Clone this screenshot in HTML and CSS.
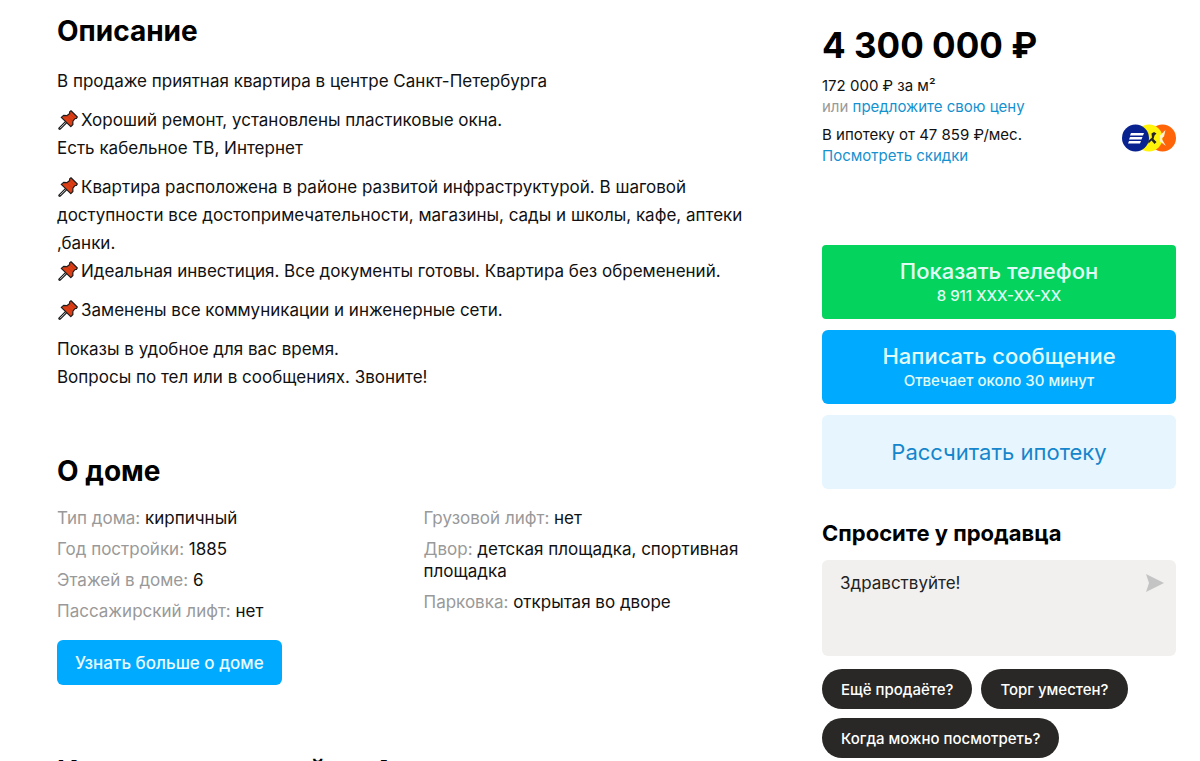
FILE: index.html
```html
<!DOCTYPE html>
<html lang="ru">
<head>
<meta charset="utf-8">
<title>Квартира в центре Санкт-Петербурга</title>
<link rel="stylesheet" href="styles.css">
</head>
<body>
<svg class="sprite" aria-hidden="true">
  <symbol id="pin" viewBox="0 0 20 20">
    <path d="M8 12.200 1.700 18.500" stroke="#1c1c1c" stroke-width="2.800" stroke-linecap="round"/>
    <path d="M8 12.200 2 18.200" stroke="#c9ced2" stroke-width="1"/>
    <path d="M13 .8 19.300 7 18.400 8.500 16.800 8.600 14.800 11.300 14.900 14.500 12.800 16.600 3.300 7.400 5.600 5.400 8.800 5.700 11.700 3.500 11.600 1.900Z" fill="#dc3f16" stroke="#1c1c1c" stroke-width="1.200" stroke-linejoin="round"/>
    <path d="M11.700 3.500 16.800 8.600M8.800 5.700 14.800 11.300" stroke="#b8300f" stroke-width=".6"/>
  </symbol>
</svg>
<main class="page">
  <div class="content">
    <section class="description">
      <h2 class="title">Описание</h2>
      <p>В продаже приятная квартира в центре Санкт-Петербурга</p>
      <p><svg class="pin"><use href="#pin"/></svg>Хороший ремонт, установлены пластиковые окна.<br>Есть кабельное ТВ, Интернет</p>
      <p><svg class="pin"><use href="#pin"/></svg>Квартира расположена в районе развитой инфраструктурой. В шаговой<br>доступности все достопримечательности, магазины, сады и школы, кафе, аптеки<br>,банки.<br><svg class="pin"><use href="#pin"/></svg>Идеальная инвестиция. Все документы готовы. Квартира без обременений.</p>
      <p><svg class="pin"><use href="#pin"/></svg>Заменены все коммуникации и инженерные сети.</p>
      <p>Показы в удобное для вас время.<br>Вопросы по тел или в сообщениях. Звоните!</p>
    </section>
    <section class="house">
      <h2 class="title">О доме</h2>
      <div class="params">
        <ul class="param-list">
          <li><span class="label">Тип дома:</span> кирпичный</li>
          <li><span class="label">Год постройки:</span> 1885</li>
          <li><span class="label">Этажей в доме:</span> 6</li>
          <li><span class="label">Пассажирский лифт:</span> нет</li>
        </ul>
        <ul class="param-list">
          <li><span class="label">Грузовой лифт:</span> нет</li>
          <li><span class="label">Двор:</span> детская площадка, спортивная площадка</li>
          <li><span class="label">Парковка:</span> открытая во дворе</li>
        </ul>
      </div>
      <button class="more" type="button">Узнать больше о доме</button>
    </section>
    <h2 class="title next-title">Ипотека с выгодой на Авито</h2>
  </div>
  <aside class="sidebar">
    <h1 class="price">4 300 000 ₽</h1>
    <div class="price-info">
      <div>172 000 ₽ за м²</div>
      <div><span class="label">или</span> <a href="#">предложите свою цену</a></div>
    </div>
    <div class="mortgage">
      <div>
        <div>В ипотеку от 47 859 ₽/мес.</div>
        <a href="#">Посмотреть скидки</a>
      </div>
      <svg class="banks" viewBox="0 0 54 28" aria-label="Банки">
        <circle cx="40.500" cy="14" r="13.500" fill="#ff6508"/>
        <circle cx="27" cy="14" r="13.500" fill="#fff40a"/>
        <path d="M38 11.500 43.500 6 42 12.500 39.500 14.500 44 22 38 17.500Z" fill="#fff3cf"/>
        <path d="M26 17 30 13.500 29.500 9.500 32 8 34.500 9.500 32.500 11.500 31.500 15 34.500 18 32.500 20 29.500 16.500 26.500 19.500Z" fill="#252525"/>
        <circle cx="13.500" cy="14" r="13.500" fill="#08228f"/>
        <path d="M9 9h13l-1 2.500H8ZM8 13h12.500l-1 2.500H7ZM7 17h12l-1 2.500H6Z" fill="#fff"/>
      </svg>
    </div>
    <div class="actions">
      <button class="action phone" type="button"><span>Показать телефон</span><small>8 911 XXX-XX-XX</small></button>
      <button class="action message" type="button"><span>Написать сообщение</span><small>Отвечает около 30 минут</small></button>
      <button class="action calc" type="button">Рассчитать ипотеку</button>
    </div>
    <form class="ask">
      <label class="ask-title" for="question">Спросите у продавца</label>
      <div class="ask-box">
        <textarea id="question">Здравствуйте!</textarea>
        <button class="send" type="button" aria-label="Отправить">
          <svg viewBox="0 0 18 18"><path d="M0 0 18 9 0 18 3 9Z" fill="#c4c4c4"/></svg>
        </button>
      </div>
      <div class="chips">
        <button class="chip" type="button">Ещё продаёте?</button>
        <button class="chip" type="button">Торг уместен?</button>
        <button class="chip" type="button">Когда можно посмотреть?</button>
      </div>
    </form>
  </aside>
</main>
</body>
</html>
```
FILE: styles.css
```css
* { box-sizing: border-box; }
body { margin: 0; background: #fff; color: #111; font-family: Inter, "Liberation Sans", sans-serif; font-size: 17px; }
h1, h2, p, ul { margin: 0; padding: 0; }
button, textarea { border: 0; font: inherit; }
button { cursor: pointer; }
a { color: #1591cf; text-decoration: none; }
.sprite { position: absolute; width: 0; height: 0; }
.page { display: grid; grid-template-columns: minmax(0, 1fr) 354px; gap: 56px; padding: 14px 24px 0 57px; }
.title { color: #000; font-size: 28px; line-height: 34px; font-weight: 700; }
.label { color: #999; }

.description { display: flex; flex-direction: column; gap: 11px; line-height: 28px; }
.description .title { margin-bottom: 8px; }
.pin { width: 20px; height: 20px; margin: 0 3px 0 1px; vertical-align: -4px; }

.house { margin-top: 63px; }
.params { display: grid; grid-template-columns: 1fr 1fr; gap: 24px; margin-top: 19px; }
.param-list { display: flex; flex-direction: column; gap: 9px; list-style: none; line-height: 22px; }
.more { margin-top: 18px; padding: 0 18px; height: 45px; border-radius: 6px; background: #00aaff; color: #e8fbff; font-weight: 500; }
.next-title { margin-top: 69px; }

.sidebar { padding-top: 7px; font-size: 15px; line-height: 21px; }
.price { color: #000; font-size: 35px; line-height: 48px; font-weight: 700; }
.price-info { margin-top: 6px; }
.mortgage { display: flex; justify-content: space-between; align-items: flex-start; margin-top: 7px; }
.banks { width: 54px; height: 28px; }
.actions { display: grid; gap: 11px; margin-top: 79px; }
.action { display: flex; flex-direction: column; align-items: center; justify-content: center; min-height: 74px; border-radius: 6px; color: #e0fcf5; font-size: 22px; line-height: 28px; font-weight: 500; }
.action small { font-size: 15px; line-height: 22px; }
.phone { border-radius: 4px; background: #04d45d; }
.message { background: #00aaff; }
.calc { background: #e6f5fe; color: #1585cc; font-weight: 400; }

.ask { margin-top: 28px; }
.ask-title { display: block; color: #000; font-size: 22px; line-height: 32px; font-weight: 700; }
.ask-box { display: flex; align-items: flex-start; margin-top: 11px; padding: 11px 12px 0 18px; min-height: 96px; border-radius: 6px; background: #f1f0ee; }
.ask-box textarea { flex: 1; min-width: 0; height: 72px; padding: 0; outline: 0; resize: none; background: none; color: #222; font-size: 17px; line-height: 24px; }
.send { display: flex; padding: 3px 0; background: none; }
.send svg { width: 18px; height: 18px; }
.chips { display: flex; flex-wrap: wrap; gap: 9px; margin-top: 13px; }
.chip { height: 40px; padding: 0 19px; border-radius: 20px; background: #292826; color: #fff; font-size: 15px; font-weight: 500; }
```
